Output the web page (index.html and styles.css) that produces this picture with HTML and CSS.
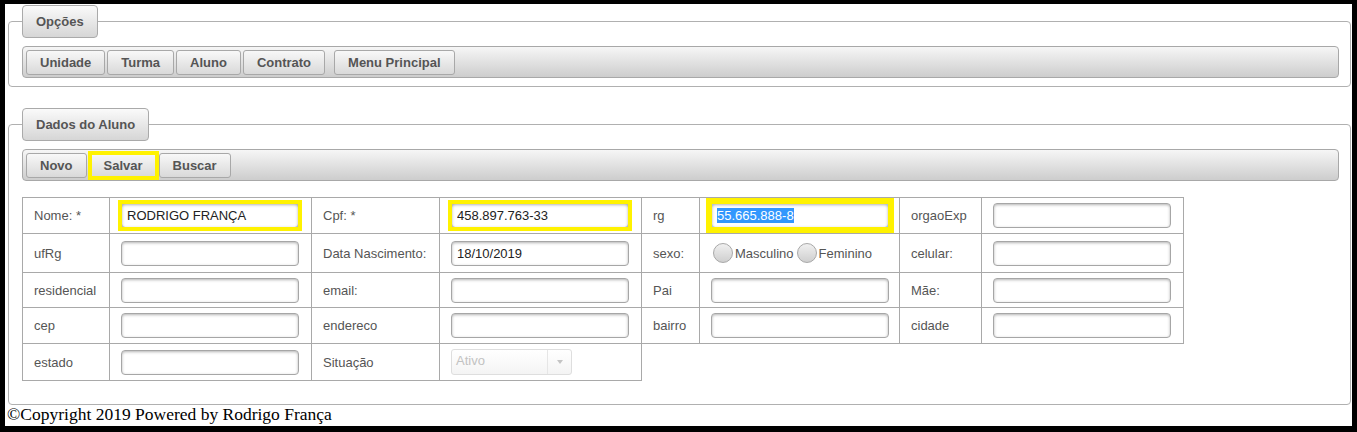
FILE: index.html
```html
<!DOCTYPE html>
<html lang="pt-BR">
<head>
<meta charset="utf-8">
<title>Dados do Aluno</title>
<link rel="stylesheet" href="styles.css">
</head>
<body>
<div class="page">
  <fieldset class="box box-opcoes">
    <legend class="tab">Opções</legend>
    <div class="toolbar">
      <button class="btn">Unidade</button>
      <button class="btn">Turma</button>
      <button class="btn">Aluno</button>
      <button class="btn">Contrato</button>
      <button class="btn btn-menu">Menu Principal</button>
    </div>
  </fieldset>

  <fieldset class="box box-aluno">
    <legend class="tab">Dados do Aluno</legend>
    <div class="toolbar">
      <button class="btn">Novo</button>
      <span class="mark mark-btn"><button class="btn">Salvar</button></span>
      <button class="btn">Buscar</button>
    </div>

    <div class="form-grid">
      <div class="cell">Nome: *</div>
      <div class="cell"><span class="mark"><input class="field" type="text" value="RODRIGO FRANÇA"></span></div>
      <div class="cell">Cpf: *</div>
      <div class="cell"><span class="mark"><input class="field" type="text" value="458.897.763-33"></span></div>
      <div class="cell">rg</div>
      <div class="cell"><span class="mark mark-wide"><span class="field field-focus"><span class="sel">55.665.888-8</span></span></span></div>
      <div class="cell">orgaoExp</div>
      <div class="cell"><input class="field" type="text"></div>

      <div class="cell">ufRg</div>
      <div class="cell"><input class="field" type="text"></div>
      <div class="cell">Data Nascimento:</div>
      <div class="cell"><input class="field" type="text" value="18/10/2019"></div>
      <div class="cell">sexo:</div>
      <div class="cell radios">
        <span class="radio"></span><span class="radio-label">Masculino</span>
        <span class="radio"></span><span class="radio-label">Feminino</span>
      </div>
      <div class="cell">celular:</div>
      <div class="cell"><input class="field" type="text"></div>

      <div class="cell">residencial</div>
      <div class="cell"><input class="field" type="text"></div>
      <div class="cell">email:</div>
      <div class="cell"><input class="field" type="text"></div>
      <div class="cell">Pai</div>
      <div class="cell"><input class="field" type="text"></div>
      <div class="cell">Mãe:</div>
      <div class="cell"><input class="field" type="text"></div>

      <div class="cell">cep</div>
      <div class="cell"><input class="field" type="text"></div>
      <div class="cell">endereco</div>
      <div class="cell"><input class="field" type="text"></div>
      <div class="cell">bairro</div>
      <div class="cell"><input class="field" type="text"></div>
      <div class="cell">cidade</div>
      <div class="cell"><input class="field" type="text"></div>

      <div class="cell">estado</div>
      <div class="cell"><input class="field" type="text"></div>
      <div class="cell">Situação</div>
      <div class="cell">
        <div class="select">
          <span class="select-text">Ativo</span>
          <span class="select-arrow"><span class="tri"></span></span>
        </div>
      </div>
    </div>
  </fieldset>
  <p class="footer">©Copyright 2019 Powered by Rodrigo França</p>
</div>
</body>
</html>
```

FILE: styles.css
```css
body {
  margin: 0;
  background: #000;
}

.page {
  box-sizing: border-box;
  width: 1347px;
  height: 422px;
  margin: 4px 0 0 5px;
  padding: 1px 1px 0 3px;
  background: #fff;
  overflow: hidden;
  font-family: "Liberation Sans", Arial, sans-serif;
}

.box {
  margin: 0;
  min-width: 0;
  border: 1px solid #b0b0b0;
  border-radius: 4px;
  padding: 8px 11px 8px 13px;
}

.box-aluno {
  margin-top: 21px;
  padding-bottom: 23px;
}

.tab {
  box-sizing: border-box;
  height: 33px;
  padding: 0 13px;
  line-height: 31px;
  border: 1px solid #aaa;
  border-radius: 4px;
  background: linear-gradient(#fafafa, #d6d6d6);
  font-size: 13px;
  font-weight: bold;
  color: #555;
}

.toolbar {
  box-sizing: border-box;
  display: flex;
  align-items: flex-start;
  gap: 2px;
  height: 32px;
  padding: 3px;
  border: 1px solid #a8a8a8;
  border-radius: 4px;
  background: linear-gradient(#f6f6f6, #cdcdcd);
}

.btn {
  box-sizing: border-box;
  height: 25px;
  margin: 0;
  padding: 0 13px;
  border: 1px solid #a8a8a8;
  border-radius: 3px;
  background: linear-gradient(#f8f8f8, #d9d9d9);
  font-family: "Liberation Sans", Arial, sans-serif;
  font-size: 13px;
  font-weight: bold;
  color: #555;
  line-height: 23px;
}

.btn-menu {
  margin-left: 7px;
}

.mark {
  display: inline-flex;
  outline: 4px solid #fff200;
  outline-offset: -1px;
}

.mark-btn {
  outline-offset: -2px;
  margin-left: 1px;
}

.mark-wide {
  outline-width: 6px;
  outline-offset: -1px;
}

.form-grid {
  display: grid;
  grid-template-columns: 88px 202px 128px 202px 58px 200px 82px 202px;
  grid-template-rows: 37px 39px 35px 36px 37px;
  width: max-content;
  margin-top: 16px;
}

.cell {
  display: flex;
  align-items: center;
  padding: 0 11px;
  border-right: 1px solid #a9a9a9;
  border-bottom: 1px solid #a9a9a9;
  font-size: 13px;
  color: #555;
  white-space: nowrap;
}

.cell:nth-child(-n+8) {
  border-top: 1px solid #a9a9a9;
}

.cell:nth-child(8n+1) {
  border-left: 1px solid #a9a9a9;
}

.field {
  box-sizing: border-box;
  width: 178px;
  height: 25px;
  margin: 0;
  padding: 0 5px;
  border: 1px solid #a6a6a6;
  border-radius: 4px;
  box-shadow: inset 0 1px 3px rgba(0, 0, 0, 0.3);
  background: #fff;
  font-family: "Liberation Sans", Arial, sans-serif;
  font-size: 13px;
  color: #222;
  line-height: 23px;
}

.field-focus {
  display: flex;
  align-items: center;
  border-color: #8fb4dc;
}

.sel {
  background: #3297fd;
  color: #fff;
  line-height: 15px;
}

.radios {
  padding-left: 13px;
}

.radio {
  box-sizing: border-box;
  width: 20px;
  height: 20px;
  border: 1px solid #a8a8a8;
  border-radius: 50%;
  background: linear-gradient(#f0f0f0, #cfcfcf);
}

.radio-label {
  margin: 0 3px 0 2px;
}

.select {
  box-sizing: border-box;
  display: flex;
  width: 121px;
  height: 26px;
  border: 1px solid #dedede;
  border-radius: 3px;
  background: linear-gradient(#ffffff, #f4f4f4);
  color: #c2c2c2;
}

.select-text {
  flex: 1;
  padding-left: 4px;
  line-height: 22px;
}

.select-arrow {
  display: flex;
  align-items: center;
  justify-content: center;
  width: 23px;
  border-left: 1px solid #e6e6e6;
}

.tri {
  width: 0;
  height: 0;
  border-left: 3px solid transparent;
  border-right: 3px solid transparent;
  border-top: 4px solid #c4c4c4;
}

.footer {
  margin: 0 0 0 -1px;
  font-family: "Liberation Serif", "Times New Roman", serif;
  font-size: 17.5px;
  line-height: 19px;
  color: #000;
}
```
